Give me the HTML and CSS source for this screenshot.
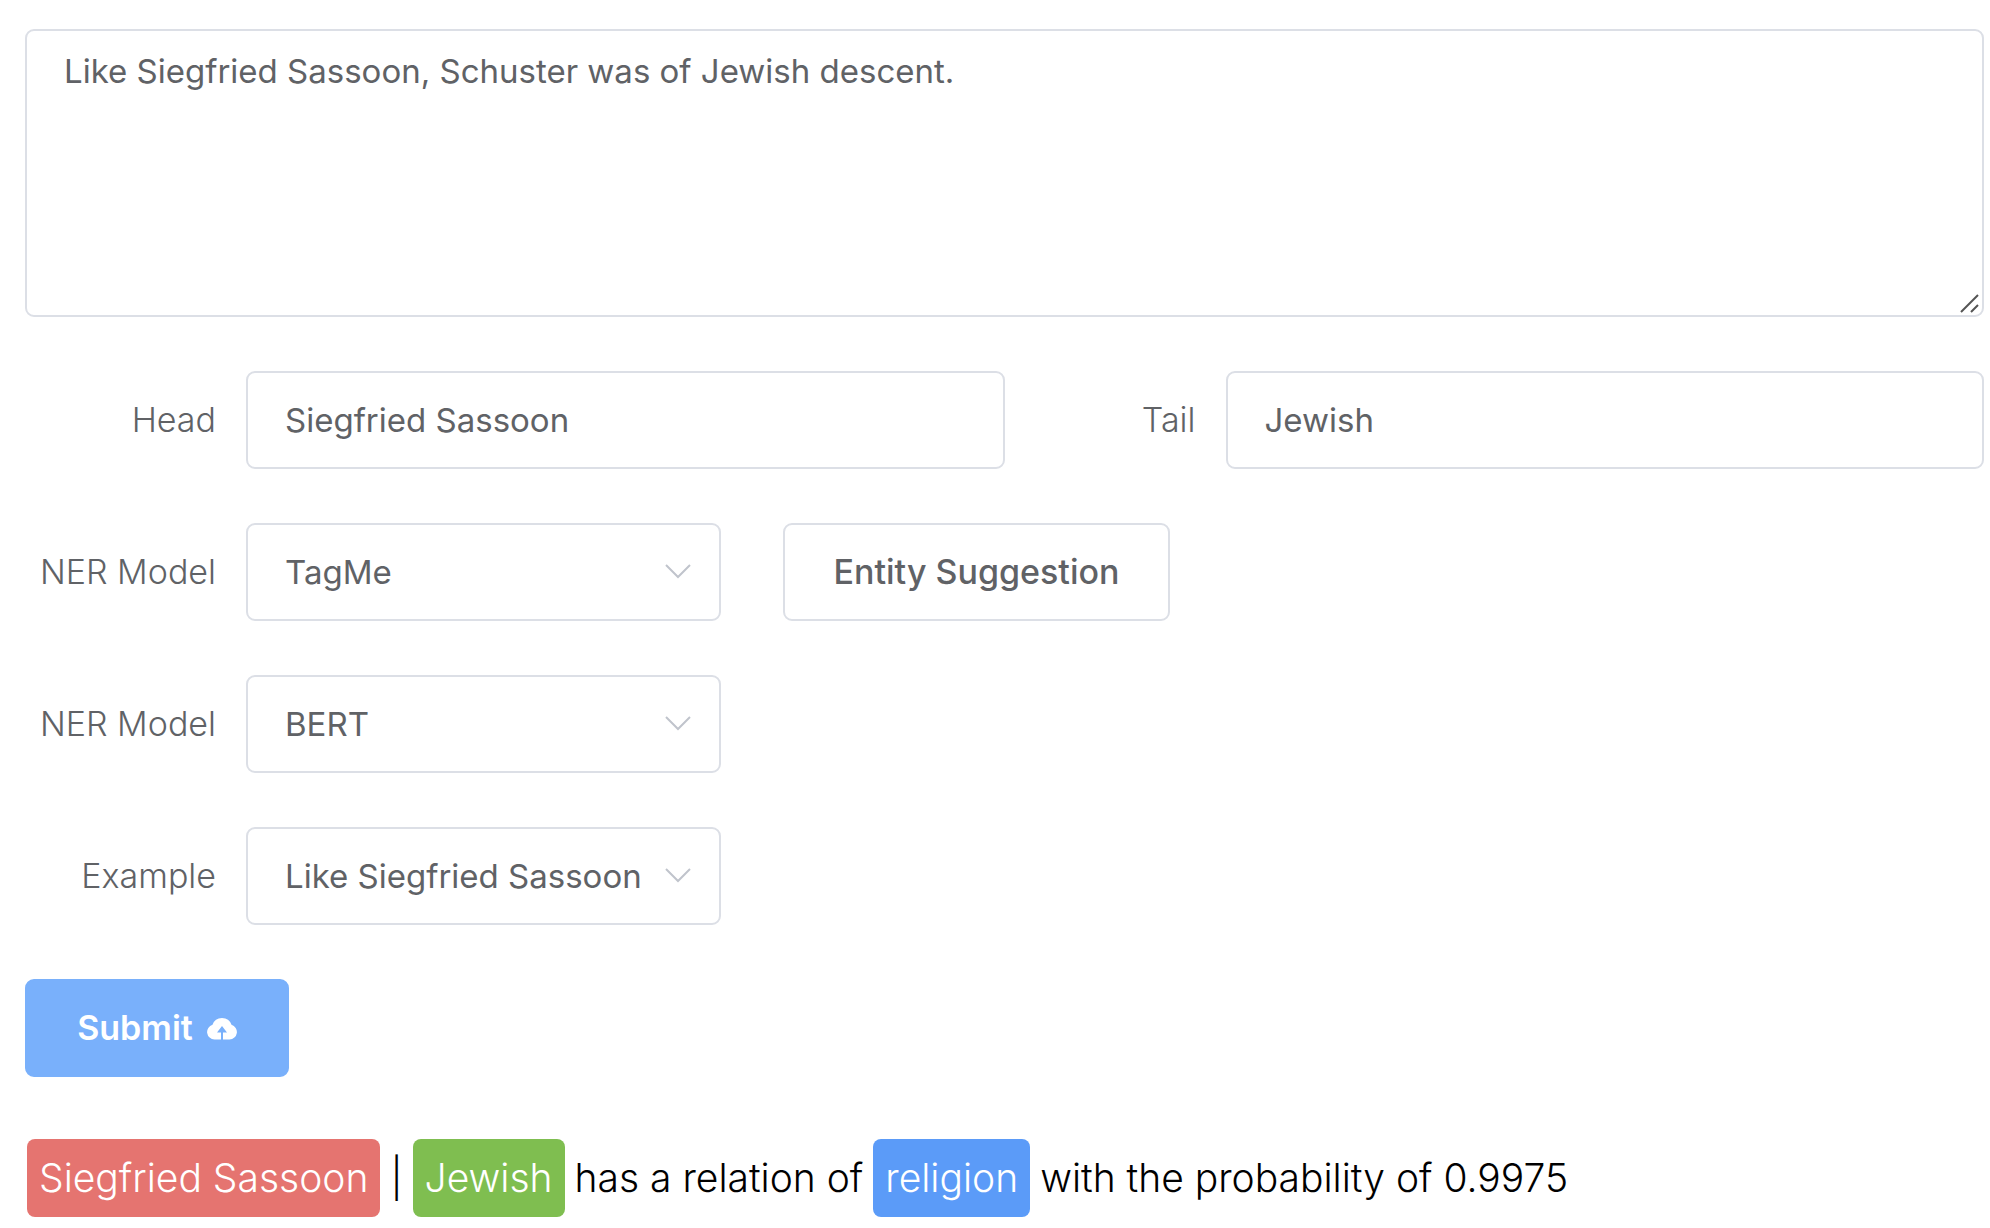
FILE: index.html
```html
<!DOCTYPE html>
<html lang="en">
<head>
<meta charset="utf-8">
<meta name="viewport" content="width=device-width, initial-scale=1">
<title>Relation Extraction</title>
<link rel="stylesheet" href="styles.css">
</head>
<body>
<main class="page">
  <form class="form">
    <div class="text-box">
      <textarea class="control text-area" aria-label="Sentence">Like Siegfried Sassoon, Schuster was of Jewish descent.</textarea>
      <svg class="grip" viewBox="0 0 20 20" aria-hidden="true"><path d="M1 19 18 2M11 19l7-7"/></svg>
    </div>
    <div class="pair">
      <div class="row">
        <label class="label" for="head">Head</label>
        <input class="control" id="head" type="text" value="Siegfried Sassoon">
      </div>
      <div class="row">
        <label class="label" for="tail">Tail</label>
        <input class="control" id="tail" type="text" value="Jewish">
      </div>
    </div>
    <div class="row">
      <label class="label" for="ner">NER Model</label>
      <div class="select-box">
        <select class="control select" id="ner"><option>TagMe</option></select>
        <svg class="chevron" viewBox="0 0 26 16" aria-hidden="true"><path d="M1 2l12 12L25 2"/></svg>
      </div>
      <button class="button button-plain" type="button">Entity Suggestion</button>
    </div>
    <div class="row">
      <label class="label" for="model">NER Model</label>
      <div class="select-box">
        <select class="control select" id="model"><option>BERT</option></select>
        <svg class="chevron" viewBox="0 0 26 16" aria-hidden="true"><path d="M1 2l12 12L25 2"/></svg>
      </div>
    </div>
    <div class="row">
      <label class="label" for="example">Example</label>
      <div class="select-box">
        <select class="control select" id="example"><option>Like Siegfried Sassoon</option></select>
        <svg class="chevron" viewBox="0 0 26 16" aria-hidden="true"><path d="M1 2l12 12L25 2"/></svg>
      </div>
    </div>
    <button class="button button-primary" type="submit">Submit
      <svg class="cloud" viewBox="0 0 30 24" aria-hidden="true"><path fill-rule="evenodd" d="M14 23.500H7.500A7.500 7.500 0 0 1 5.500 8.800 10 10 0 0 1 24.500 8.800 7.500 7.500 0 0 1 22.500 23.500H16V16.500H20L15 10 10 16.500H14Z"/></svg>
    </button>
  </form>
  <p class="result">
    <span class="tag tag-head">Siegfried Sassoon</span>
    <span>|</span>
    <span class="tag tag-tail">Jewish</span>
    <span>has a relation of</span>
    <span class="tag tag-relation">religion</span>
    <span>with the probability of 0.9975</span>
  </p>
</main>
</body>
</html>
```
FILE: styles.css
```css
* {
  box-sizing: border-box;
}

body {
  margin: 0;
  background: #fff;
  color: #606266;
  font-family: Inter, "Liberation Sans", sans-serif;
  font-size: 34px;
  line-height: 48px;
}

.page {
  padding: 29px 6px 10px 25px;
}

.form {
  display: flex;
  flex-direction: column;
  align-items: stretch;
  gap: 54px;
}

.text-box,
.select-box {
  position: relative;
}

.control {
  display: block;
  width: 100%;
  min-width: 0;
  height: 98px;
  margin: 0;
  padding: 0 37px;
  border: 2px solid #dcdfe6;
  border-radius: 9px;
  background: #fff;
  color: #606266;
  font: inherit;
  font-size: 33px;
  outline: none;
}

.text-area {
  height: 288px;
  padding: 16px 37px;
  resize: none;
}

.grip {
  position: absolute;
  right: 4px;
  bottom: 4px;
  width: 20px;
  height: 20px;
  fill: none;
  stroke: #555;
  stroke-width: 2;
}

.pair {
  display: grid;
  grid-template-columns: 1fr 1fr;
}

.row {
  display: flex;
  align-items: center;
}

.label {
  flex: 0 0 221px;
  padding-right: 30px;
  font-weight: 300;
  text-align: right;
  white-space: nowrap;
}

.select-box {
  flex: 0 0 475px;
}

.select {
  appearance: none;
  padding-right: 64px;
}

.chevron {
  position: absolute;
  top: 40px;
  right: 30px;
  width: 26px;
  height: 16px;
  fill: none;
  stroke: #c0c4cc;
  stroke-width: 2;
  pointer-events: none;
}

.button {
  display: flex;
  align-items: center;
  justify-content: center;
  height: 98px;
  padding: 0 48px;
  border: 2px solid #dcdfe6;
  border-radius: 9px;
  font: inherit;
  font-weight: 500;
  white-space: nowrap;
}

.button-plain {
  min-width: 387px;
  margin-left: 62px;
  background: #fff;
  color: #606266;
}

.button-primary {
  align-self: flex-start;
  gap: 14px;
  min-width: 264px;
  border-color: #79b0fb;
  background: #79b0fb;
  color: #fff;
  font-weight: 600;
}

.cloud {
  width: 30px;
  height: 24px;
  fill: #fff;
}

.result {
  display: flex;
  flex-wrap: wrap;
  align-items: center;
  gap: 10px;
  margin: 62px 0 0 2px;
  color: #000;
  font-size: 39px;
  font-weight: 300;
}

.tag {
  padding: 15px 12px;
  border-radius: 8px;
  color: #fff;
}

.tag-head {
  background: #e57470;
}

.tag-tail {
  background: #7fbe50;
}

.tag-relation {
  background: #5b9bf8;
}
```
